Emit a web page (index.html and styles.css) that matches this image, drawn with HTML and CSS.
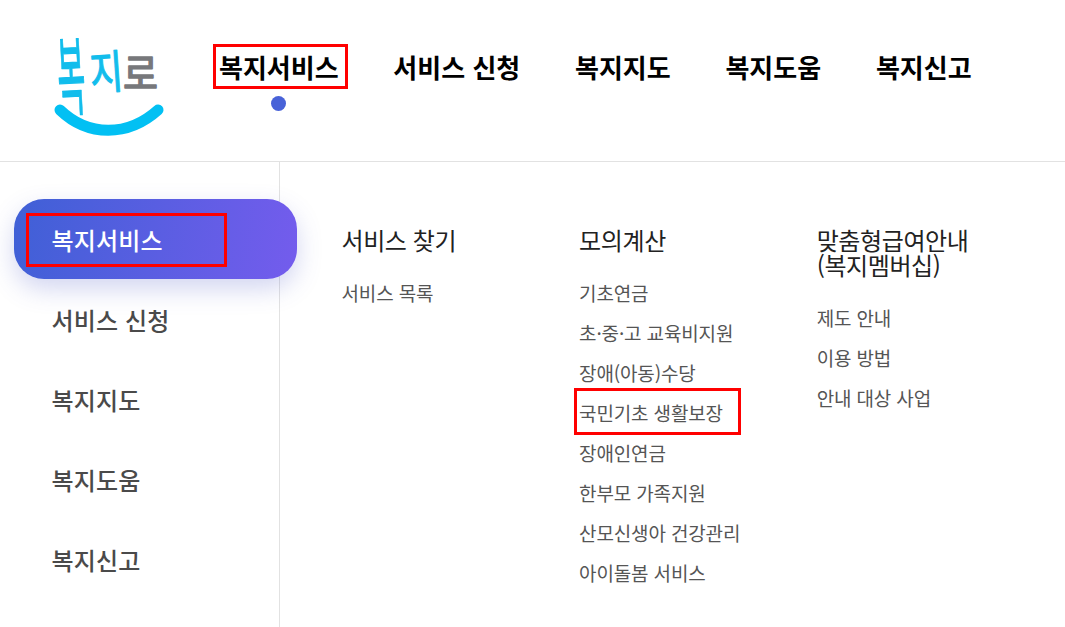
FILE: index.html
```html
<!DOCTYPE html>
<html lang="ko">
<head>
<meta charset="utf-8">
<title>복지로</title>
<link rel="stylesheet" href="styles.css">
</head>
<body>
<header class="header">
  <a class="logo" href="#" aria-label="복지로">
    <svg class="logo-svg" width="112" height="102" viewBox="0 0 112 102">
      <text class="logo-b" transform="translate(6 74) rotate(-3) scale(.76 2.15)">복</text>
      <text class="logo-j" transform="translate(38 55) rotate(-4) scale(.9 1.15)">지</text>
      <text class="logo-r" transform="translate(70 54) scale(1.12 1.25)">로</text>
      <path d="M7 75C35 102 75 102 105 75" fill="none" stroke="#02c0f3" stroke-width="11" stroke-linecap="round"/>
    </svg>
  </a>
  <nav class="gnb">
    <a class="gnb-item is-active" href="#"><span class="gnb-box"></span>복지서비스<span class="gnb-dot"></span></a>
    <a class="gnb-item" href="#">서비스 신청</a>
    <a class="gnb-item" href="#">복지지도</a>
    <a class="gnb-item" href="#">복지도움</a>
    <a class="gnb-item" href="#">복지신고</a>
  </nav>
</header>
<div class="body">
  <aside class="side">
    <a class="side-item is-active" href="#"><span class="side-box"></span>복지서비스</a>
    <a class="side-item" href="#">서비스 신청</a>
    <a class="side-item" href="#">복지지도</a>
    <a class="side-item" href="#">복지도움</a>
    <a class="side-item" href="#">복지신고</a>
  </aside>
  <main class="menu">
    <section class="col">
      <h2 class="col-title">서비스 찾기</h2>
      <ul class="links">
        <li><a href="#">서비스 목록</a></li>
      </ul>
    </section>
    <section class="col">
      <h2 class="col-title">모의계산</h2>
      <ul class="links">
        <li><a href="#">기초연금</a></li>
        <li><a href="#">초·중·고 교육비지원</a></li>
        <li><a href="#">장애(아동)수당</a></li>
        <li><a class="link-mark" href="#"><span class="link-box"></span>국민기초 생활보장</a></li>
        <li><a href="#">장애인연금</a></li>
        <li><a href="#">한부모 가족지원</a></li>
        <li><a href="#">산모신생아 건강관리</a></li>
        <li><a href="#">아이돌봄 서비스</a></li>
      </ul>
    </section>
    <section class="col">
      <h2 class="col-title">맞춤형급여안내<br>(복지멤버십)</h2>
      <ul class="links">
        <li><a href="#">제도 안내</a></li>
        <li><a href="#">이용 방법</a></li>
        <li><a href="#">안내 대상 사업</a></li>
      </ul>
    </section>
  </main>
</div>
</body>
</html>
```
FILE: styles.css
```css
* { box-sizing: border-box; }
html, body { margin: 0; padding: 0; }
body {
  width: 1065px;
  height: 627px;
  overflow: hidden;
  background: #fff;
  font-family: "Noto Sans CJK KR", "Noto Sans", sans-serif;
  color: #333;
}
a { color: inherit; text-decoration: none; }
.header {
  display: flex;
  align-items: flex-start;
  height: 162px;
  border-bottom: 1px solid #e2e2e2;
  padding-left: 53px;
}
.logo { display: block; width: 112px; margin-top: 35px; flex: none; }
.logo-svg { display: block; overflow: visible; }
.logo-b, .logo-j, .logo-r {
  font-family: "Noto Sans CJK KR", sans-serif;
  font-weight: 400;
  stroke-linejoin: round;
}
.logo-b { font-size: 40px; fill: #12bdec; stroke: #12bdec; stroke-width: .6px; }
.logo-j { font-size: 40px; fill: #12bdec; stroke: #12bdec; stroke-width: 1px; }
.logo-r { font-size: 34px; fill: #77787b; stroke: #77787b; stroke-width: 1.2px; }
.gnb { display: flex; gap: 54.75px; margin-left: 54px; margin-top: 47px; }
.gnb-item {
  position: relative;
  font-size: 26px;
  line-height: 40px;
  font-weight: 700;
  color: #000;
  white-space: nowrap;
}
.gnb-box {
  position: absolute;
  left: -6px; right: -9px; top: -3px; bottom: -2px;
  border: 3px solid #f00;
}
.gnb-dot {
  position: absolute;
  left: 52px; top: 49px;
  width: 15px; height: 15px;
  border-radius: 50%;
  background: #4862d8;
}
.body { display: flex; height: 465px; }
.side {
  width: 280px;
  flex: none;
  border-right: 1px solid #e2e2e2;
  padding: 37px 0 0 14px;
  display: flex;
  flex-direction: column;
}
.side-item {
  position: relative;
  display: flex;
  align-items: center;
  width: 283px;
  height: 80px;
  padding-left: 37.5px;
  font-size: 24px;
  font-weight: 500;
  letter-spacing: .15px;
  color: #4a4a4a;
  border-radius: 30px;
  white-space: nowrap;
}
.side-item.is-active {
  color: #fff;
  background: linear-gradient(100deg, #3f60d6, #745ced);
  box-shadow: 0 10px 25px rgba(80, 90, 200, .25);
}
.side-box {
  position: absolute;
  left: 12px; top: 14px;
  width: 201px; height: 54px;
  border: 3px solid #f00;
}
.menu {
  flex: 1;
  display: grid;
  grid-template-columns: repeat(3, 237.6px);
  padding: 65px 0 0 61.5px;
  align-content: start;
}
.col-title {
  margin: 0;
  font-size: 24px;
  font-weight: 400;
  line-height: 25px;
  letter-spacing: -.4px;
  color: #222;
}
.links { list-style: none; margin: 21px 0 0; padding: 0; }
.links li {
  height: 40px;
  line-height: 40px;
  font-size: 19px;
  letter-spacing: -.15px;
  color: #555;
  white-space: nowrap;
}
.link-mark { position: relative; display: inline-block; }
.link-box {
  position: absolute;
  left: -5.5px; right: -18.5px; top: -5px; bottom: -2px;
  border: 3px solid #f00;
}
```
